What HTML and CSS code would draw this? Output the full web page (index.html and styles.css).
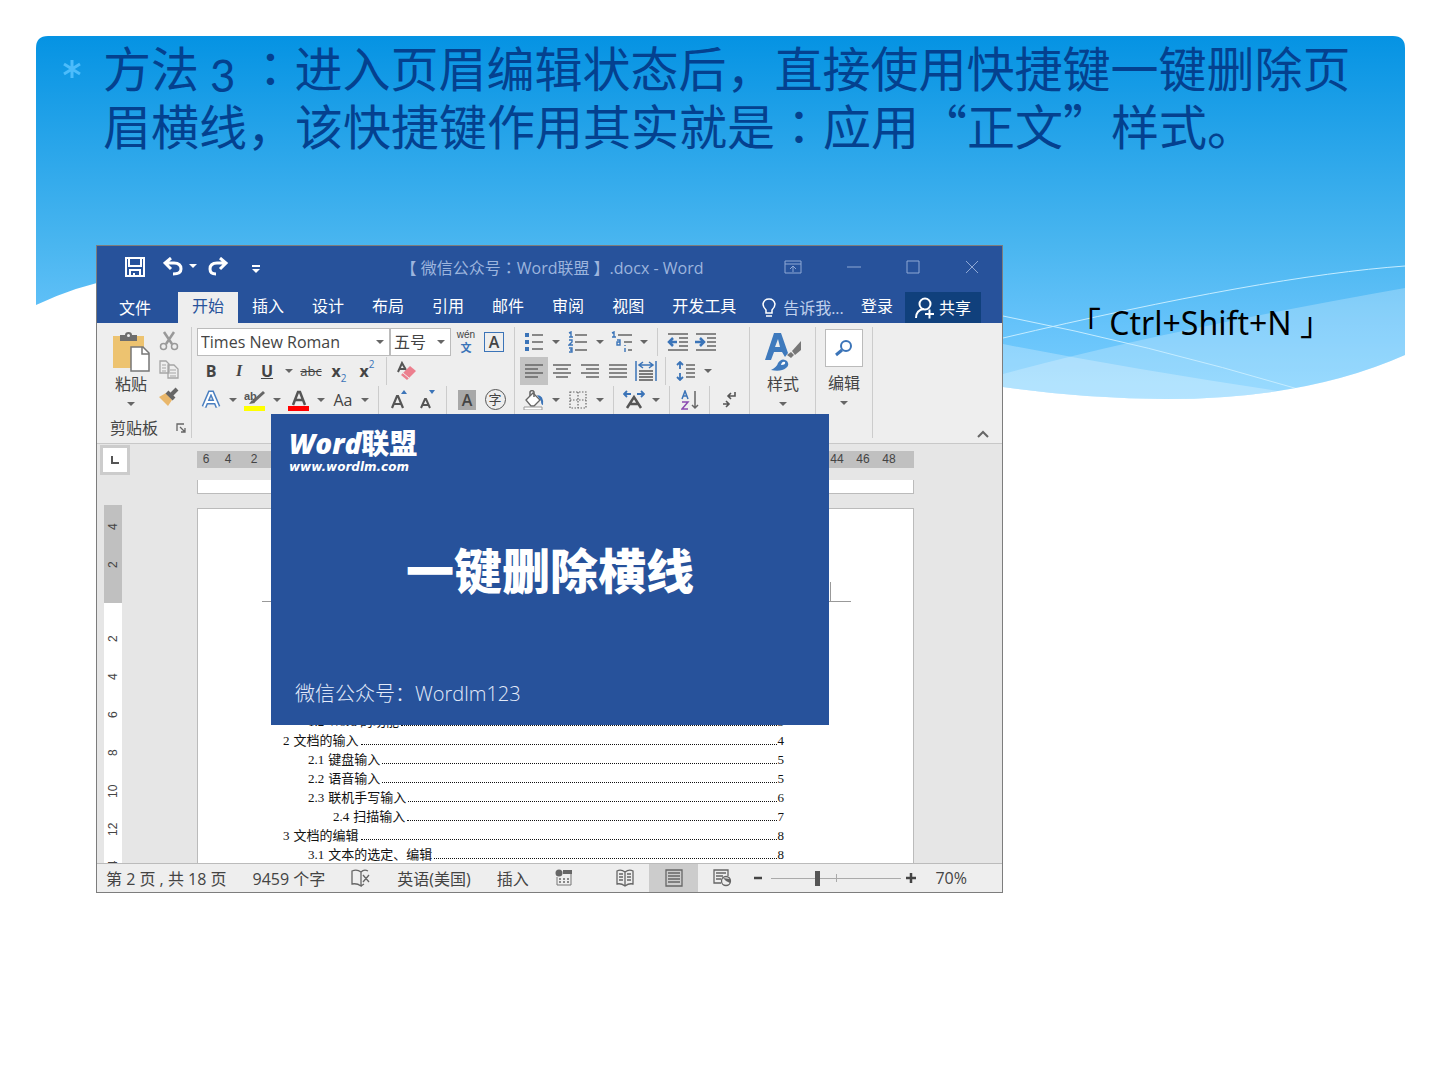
FILE: index.html
```
<!DOCTYPE html>
<html lang="zh-CN">
<head>
<meta charset="UTF-8">
<meta name="viewport" content="width=device-width, initial-scale=1.0">
<title>删除页眉横线</title>
<link rel="stylesheet" href="styles.css">
</head>
<body>
<div class="slide">
    <svg class="wave" viewBox="0 0 1369 363" preserveAspectRatio="none" aria-hidden="true">
        <defs>
            <linearGradient id="sky" x1="0" y1="0" x2="0" y2="1">
                <stop offset="0" stop-color="#0593e3"/>
                <stop offset=".58" stop-color="#4ab6f0"/>
                <stop offset=".8" stop-color="#66c3fa"/>
                <stop offset="1" stop-color="#7bd0ff"/>
            </linearGradient>
            <clipPath id="edge">
                <path d="M0 12Q0 0 12 0H1357Q1369 0 1369 12V319Q1270 363 1130 363Q1050 363 967 351C700 310 400 240 200 232Q80 230 0 269Z"/>
            </clipPath>
        </defs>
        <g clip-path="url(#edge)">
            <rect width="1369" height="363" fill="url(#sky)"/>
            <path d="M967 338Q1120 296 1369 252V363H967Z" fill="#fff" opacity=".24"/>
            <path d="M967 308Q1100 334 1250 356L1240 363H967Z" fill="#fff" opacity=".26"/>
            <path d="M967 302Q1230 240 1369 230M967 280Q1110 308 1262 353" fill="none" stroke="#c5ecff" stroke-width="1"/>
        </g>
    </svg>

    <ul class="points">
        <li>
            <svg class="star" viewBox="0 0 20 20" aria-hidden="true"><path d="M10 1V19M2 5L18 15M18 5L2 15"/></svg>
            <p>方法 <span class="num">3</span> <span class="colon" lang="ja">：</span>进入页眉编辑状态后，直接使用快捷键一键删除页<br>眉横线，该快捷键作用其实就是<span class="colon" lang="ja">：</span>应用“正文”样式。</p>
        </li>
    </ul>

    <div class="stage">
        <div class="word">
            <header class="titlebar">
                <div class="quick">
                    <button aria-label="保存"><svg width="38" height="20"><path d="M1 1H19V19H1Z M4 2V9H16V2 M5 19V13H15V19 M9 19V16" fill="none" stroke="#fff" stroke-width="2"/></svg></button>
                    <button aria-label="撤消"><svg width="45" height="20"><path d="M8 1L2 6L8 12M2 6H11Q18 6 18 12Q18 17 10 17" fill="none" stroke="#fff" stroke-width="3"/><path d="M26 7H34L30 11Z" fill="#fff"/></svg></button>
                    <button aria-label="恢复"><svg width="43" height="20"><path d="M12 1L18 6L12 12M18 6H9Q2 6 2 12Q2 17 8 17" fill="none" stroke="#fff" stroke-width="3"/></svg></button>
                    <button aria-label="自定义快速访问工具栏"><svg width="10" height="20"><path d="M1 8H9V10H1ZM1 12H9L5 16Z" fill="#fff"/></svg></button>
                </div>
                <div class="docname">【 微信公众号<span class="colon" lang="ja">：</span>Word联盟 】.docx - Word</div>
                <div class="winbtns">
                    <button aria-label="功能区显示选项"><svg width="18" height="14"><path d="M1 1H17V13H1ZM1 4H17M9 12V6M6 9L9 6L12 9"/></svg></button>
                    <button aria-label="最小化"><svg width="14" height="14"><path d="M0 7H14"/></svg></button>
                    <button aria-label="最大化"><svg width="14" height="14"><path d="M1 1H13V13H1Z"/></svg></button>
                    <button aria-label="关闭"><svg width="14" height="14"><path d="M1 1L13 13M13 1L1 13"/></svg></button>
                </div>
            </header>

            <nav class="tabs">
                <button class="tab file">文件</button>
                <button class="tab active">开始</button>
                <button class="tab">插入</button>
                <button class="tab">设计</button>
                <button class="tab">布局</button>
                <button class="tab">引用</button>
                <button class="tab">邮件</button>
                <button class="tab">审阅</button>
                <button class="tab">视图</button>
                <button class="tab">开发工具</button>
                <button class="tell"><svg width="14" height="20"><path d="M4 15V12Q1 9 1 6Q2 1 7 1Q12 1 13 6Q13 9 10 12V15ZM4 18H10" fill="none" stroke="#fff" stroke-width="1.5"/></svg>告诉我...</button>
                <button class="login">登录</button>
                <button class="share"><svg width="20" height="22"><circle cx="10" cy="7" r="5.5" fill="none" stroke="#fff" stroke-width="2"/><path d="M1 21Q1 13 9 12M10 17H19M14.500 12.500V21.500" fill="none" stroke="#fff" stroke-width="2"/></svg>共享</button>
            </nav>

            <div class="ribbon">
                <div class="group clip">
                    <div class="clip-tools">
                        <button class="big" aria-label="粘贴">
                            <svg width="38" height="40"><path d="M1 4H32V36H1Z" fill="#edc370"/><path d="M8 3H13Q13 0 16.500 0Q20 0 20 3H25V9H8Z" fill="#6d6d6d"/><circle cx="16.500" cy="3.500" r="1.500" fill="#eee"/><path d="M19 15H31L37 21V39H19Z" fill="#fff" stroke="#777" stroke-width="1.500"/><path d="M30 15V22H37" fill="none" stroke="#777" stroke-width="1.500"/></svg>
                            <span>粘贴</span>
                            <i class="caret"></i>
                        </button>
                        <div class="clip-side">
                            <button class="tool" aria-label="剪切"><svg width="20" height="20"><path d="M5 1L13 13M15 1L7 13" stroke="#999" stroke-width="2.500"/><circle cx="4.500" cy="15.500" r="3" fill="none" stroke="#999" stroke-width="1.500"/><circle cx="15.500" cy="15.500" r="3" fill="none" stroke="#999" stroke-width="1.500"/></svg></button>
                            <button class="tool" aria-label="复制"><svg width="20" height="20"><path d="M1 2H7L10 5V14H1ZM9 6H15L19 10V19H9Z" fill="#eee" stroke="#a5a5a5" stroke-width="1.300"/><path d="M3 6H7M3 9H7M3 12H7M11 11H17M11 14H17M11 17H17" stroke="#a5a5a5"/></svg></button>
                            <button class="tool" aria-label="格式刷"><svg width="20" height="20"><path d="M0 10L7 6L13 13L9 19Z" fill="#e9b76b"/><path d="M8 5L15 12" stroke="#666" stroke-width="4"/><path d="M12 8L18 2" stroke="#666" stroke-width="4"/></svg></button>
                        </div>
                    </div>
                    <div class="group-name">剪贴板<button aria-label="剪贴板选项"><svg width="10" height="10"><path d="M1 8V1H8M4 4L9 9M9 5V9H5" fill="none" stroke="#666" stroke-width="1.300"/></svg></button></div>
                </div>

                <div class="group">
                    <div class="row">
                        <label class="combo font"><select aria-label="字体"><option>Times New Roman</option></select></label>
                        <label class="combo size"><select aria-label="字号"><option>五号</option></select></label>
                        <button class="tool wen" aria-label="拼音指南"><small>wén</small><b>文</b></button>
                        <button class="tool" aria-label="字符边框"><span class="boxed">A</span></button>
                    </div>
                    <div class="row">
                        <button class="tool"><b>B</b></button>
                        <button class="tool serif"><em>I</em></button>
                        <button class="tool"><b><u>U</u></b></button>
                        <button class="drop" aria-label="下划线"><i class="caret"></i></button>
                        <button class="tool"><s>abc</s></button>
                        <button class="tool"><b>x</b><sub>2</sub></button>
                        <button class="tool"><b>x</b><sup>2</sup></button>
                        <span class="sep"></span>
                        <button class="tool" aria-label="清除格式"><svg width="22" height="20"><path d="M2 11L6 2L10 9M3 8H9" fill="none" stroke="#555" stroke-width="2"/><path d="M14 5L20 10L11 19L5 14Z" fill="#ec7f8e"/><path d="M7 12L13 17" stroke="#eee"/></svg></button>
                    </div>
                    <div class="row">
                        <button class="tool" aria-label="文本效果"><svg width="20" height="20"><path d="M3 17L9 3H11L17 17M6 12H14" fill="none" stroke="#4a7fc0" stroke-width="5"/><path d="M3 17L9 3H11L17 17M6 12H14" fill="none" stroke="#fff" stroke-width="2"/></svg></button>
                        <button class="drop" aria-label="文本效果选项"><i class="caret"></i></button>
                        <button class="tool mark" aria-label="突出显示"><svg width="22" height="24"><text x="0" y="12" class="ab">ab</text><path d="M9 14L20 4" stroke="#666" stroke-width="3"/><path d="M5 16L8 12L11 15Z" fill="#666"/><path d="M0 18H21V23H0Z" fill="#ff0"/></svg></button>
                        <button class="drop" aria-label="突出显示颜色"><i class="caret"></i></button>
                        <button class="tool" aria-label="字体颜色"><svg width="22" height="24"><path d="M5 17L10 4H12L17 17M7 12H15" fill="none" stroke="#555" stroke-width="2.500"/><path d="M0 18H21V23H0Z" fill="#f00"/></svg></button>
                        <button class="drop" aria-label="颜色选项"><i class="caret"></i></button>
                        <button class="tool">Aa</button>
                        <button class="drop" aria-label="更改大小写"><i class="caret"></i></button>
                        <span class="sep"></span>
                        <button class="tool" aria-label="增大字号"><svg width="18" height="20"><path d="M2 18L7 6H8L13 18M4 14H11" fill="none" stroke="#555" stroke-width="2.200"/><path d="M11 4H17L14 0Z" fill="#3b74b8"/></svg></button>
                        <button class="tool" aria-label="减小字号"><svg width="18" height="20"><path d="M3 18L7 9H8L12 18M4 15H11" fill="none" stroke="#555" stroke-width="2"/><path d="M11 0H17L14 4Z" fill="#3b74b8"/></svg></button>
                        <span class="sep"></span>
                        <button class="tool" aria-label="字符底纹"><span class="shaded">A</span></button>
                        <button class="tool" aria-label="带圈字符"><span class="ring">字</span></button>
                    </div>
                </div>

                <div class="group">
                    <div class="row">
                        <button class="tool" aria-label="项目符号"><svg width="18" height="20"><path d="M0 1H4V5H0ZM0 8H4V12H0ZM0 15H4V19H0Z" fill="#3b74b8"/><path d="M7 3H18M7 10H18M7 17H18" stroke="#666" stroke-width="1.500"/></svg></button>
                        <button class="drop" aria-label="项目符号选项"><i class="caret"></i></button>
                        <button class="tool" aria-label="编号"><svg width="20" height="22"><path d="M1 2L3 1V6M1 6H5M1 9H4V11L1 14H5M1 17H4V21H1M2 19H4" fill="none" stroke="#3b74b8" stroke-width="1.400"/><path d="M7 4H19M7 11H19M7 19H19" stroke="#666" stroke-width="1.500"/></svg></button>
                        <button class="drop" aria-label="编号选项"><i class="caret"></i></button>
                        <button class="tool" aria-label="多级列表"><svg width="22" height="22"><path d="M1 2L3 1V6M1 6H5M6 9H9V14H6V11H9M14 14V15M14 17V21" fill="none" stroke="#3b74b8" stroke-width="1.400"/><path d="M7 4H21M13 11H21M17 19H21" stroke="#666" stroke-width="1.500"/></svg></button>
                        <button class="drop" aria-label="多级列表选项"><i class="caret"></i></button>
                        <span class="sep"></span>
                        <button class="tool" aria-label="减少缩进"><svg width="22" height="18"><path d="M1 1H21M12 5H21M12 9H21M12 13H21M1 17H21" stroke="#666" stroke-width="1.500"/><path d="M10 9H2M6 5L2 9L6 13" fill="none" stroke="#3b74b8" stroke-width="2.500"/></svg></button>
                        <button class="tool" aria-label="增加缩进"><svg width="22" height="18"><path d="M1 1H21M12 5H21M12 9H21M12 13H21M1 17H21" stroke="#666" stroke-width="1.500"/><path d="M0 9H8M5 5L9 9L5 13" fill="none" stroke="#3b74b8" stroke-width="2.500"/></svg></button>
                    </div>
                    <div class="row">
                        <button class="tool on" aria-label="左对齐"><svg width="20" height="14"><path d="M1 1H19M1 5H14M1 9H19M1 13H14" stroke="#666" stroke-width="1.500"/></svg></button>
                        <button class="tool" aria-label="居中"><svg width="20" height="14"><path d="M1 1H19M4 5H16M1 9H19M4 13H16" stroke="#666" stroke-width="1.500"/></svg></button>
                        <button class="tool" aria-label="右对齐"><svg width="20" height="14"><path d="M1 1H19M6 5H19M1 9H19M6 13H19" stroke="#666" stroke-width="1.500"/></svg></button>
                        <button class="tool" aria-label="两端对齐"><svg width="20" height="14"><path d="M1 1H19M1 5H19M1 9H19M1 13H19" stroke="#666" stroke-width="1.500"/></svg></button>
                        <button class="tool" aria-label="分散对齐"><svg width="22" height="20"><path d="M1 0V20M21 0V20M5 4H17M8 1L4 4L8 7M14 1L18 4L14 7" fill="none" stroke="#3b74b8" stroke-width="1.500"/><path d="M4 10H18M4 13H18M4 16H18M4 19H18" stroke="#555" stroke-width="1.500"/></svg></button>
                        <span class="sep"></span>
                        <button class="tool" aria-label="行距"><svg width="20" height="20"><path d="M4 8V1M1 4L4 1L7 4M4 12V19M1 16L4 19L7 16" fill="none" stroke="#3b74b8" stroke-width="1.800"/><path d="M10 4H19M10 8H19M10 12H19M10 16H19" stroke="#666" stroke-width="1.500"/></svg></button>
                        <button class="drop" aria-label="行距选项"><i class="caret"></i></button>
                    </div>
                    <div class="row">
                        <button class="tool" aria-label="底纹"><svg width="22" height="20"><path d="M3 10L10 3L17 10L11 16H8Z" fill="#fff" stroke="#666" stroke-width="1.300"/><path d="M7 6V2Q9-1 11 2V7" fill="none" stroke="#666" stroke-width="1.500"/><path d="M14 5Q21 5 20 15Q18 15 18 11Z" fill="#3b74b8"/><path d="M1 17H19V20H1Z" fill="#fff" stroke="#999"/></svg></button>
                        <button class="drop" aria-label="底纹选项"><i class="caret"></i></button>
                        <button class="tool" aria-label="边框"><svg width="18" height="18"><path d="M1 1H17V17H1ZM1 9H17M9 1V17" fill="none" stroke="#666" stroke-width="1.200" stroke-dasharray="1.500 1.500"/></svg></button>
                        <button class="drop" aria-label="边框选项"><i class="caret"></i></button>
                        <span class="sep"></span>
                        <button class="tool" aria-label="中文版式"><svg width="22" height="20"><path d="M4 18L11 7L18 18M7 14H15" fill="none" stroke="#555" stroke-width="2.500"/><path d="M1 4H8M4 1L1 4L4 7M14 4H21M18 1L21 4L18 7" fill="none" stroke="#3b74b8" stroke-width="1.800"/></svg></button>
                        <button class="drop" aria-label="中文版式选项"><i class="caret"></i></button>
                        <span class="sep"></span>
                        <button class="tool" aria-label="排序"><svg width="18" height="20"><path d="M1 9L4 1L7 9M2 6H6" fill="none" stroke="#3b74b8" stroke-width="1.500"/><path d="M1 12H7L1 19H7" fill="none" stroke="#8a4ab0" stroke-width="1.500"/><path d="M14 1V18M11 15L14 18L17 15" fill="none" stroke="#666" stroke-width="1.500"/></svg></button>
                        <span class="sep"></span>
                        <button class="tool" aria-label="显示编辑标记"><svg width="16" height="18"><path d="M13 1V5H6M9 2L6 5L9 8M1 13H7M4 10L7 13L4 16" fill="none" stroke="#555" stroke-width="1.600"/></svg></button>
                    </div>
                </div>

                <div class="group styles">
                    <button class="big">
                        <svg width="38" height="40"><path d="M1 28L10 1H17L24 21L21 25L18 20H10L7 28ZM11 15H16L14 7Z" fill="#3f7abd" fill-rule="evenodd"/><path d="M37 9V18L31 23L28 19Z" fill="#777"/><path d="M27 20L30 23L27 26L23 23Z" fill="#777"/><path d="M7 38Q13 35 14 31Q18 25 23 29Q26 33 22 36Q17 40 7 38Z" fill="#3f7abd"/><path d="M17 33Q18 29 21 30Q22 33 17 33Z" fill="#fff"/></svg>
                        <span>样式</span>
                        <i class="caret"></i>
                    </button>
                </div>

                <div class="group edit">
                    <button class="big">
                        <span class="find"><svg width="18" height="18"><circle cx="11" cy="7" r="5" fill="none" stroke="#3b74b8" stroke-width="2"/><path d="M7 11L1 16" stroke="#3b74b8" stroke-width="3"/></svg></span>
                        <span>编辑</span>
                        <i class="caret"></i>
                    </button>
                </div>

                <button class="fold" aria-label="折叠功能区"><svg width="12" height="8"><path d="M1 7L6 2L11 7" fill="none" stroke="#666" stroke-width="2"/></svg></button>
            </div>

            <div class="doc">
                <div class="side">
                    <button class="tabstop" aria-label="制表符"><svg width="8" height="8"><path d="M1 0V7H8" fill="none" stroke="#555" stroke-width="2"/></svg></button>
                    <div class="vruler">
                        <div class="margin"><span>4</span><span>2</span></div>
                        <div class="body"><span>2</span><span>4</span><span>6</span><span>8</span><span>10</span><span>12</span><span>14</span></div>
                    </div>
                </div>
                <div class="pages">
                    <div class="hruler"><span>6</span><span>4</span><span>2</span><span class="rest">44</span><span>46</span><span>48</span></div>
                    <div class="prev"></div>
                    <div class="page">
                        <div class="headline"><i></i></div>
                        <div class="toc">
                            <a href="#s12" class="l2"><span>1.2</span>Word 的功能<i></i>3</a>
                            <a href="#s2"><span>2</span>文档的输入<i></i>4</a>
                            <a href="#s21" class="l2"><span>2.1</span>键盘输入<i></i>5</a>
                            <a href="#s22" class="l2"><span>2.2</span>语音输入<i></i>5</a>
                            <a href="#s23" class="l2"><span>2.3</span>联机手写输入<i></i>6</a>
                            <a href="#s24" class="l3"><span>2.4</span>扫描输入<i></i>7</a>
                            <a href="#s3"><span>3</span>文档的编辑<i></i>8</a>
                            <a href="#s31" class="l2"><span>3.1</span>文本的选定、编辑<i></i>8</a>
                        </div>
                    </div>
                </div>
            </div>

            <footer class="status">
                <span>第 2 页 , 共 18 页</span>
                <span>9459 个字</span>
                <svg width="20" height="18"><path d="M10 3Q6 0 1 2V15Q6 14 10 17V3Q13 0 17 2M10 17L13 15M12 6L18 13M18 6L12 13" fill="none" stroke="#666" stroke-width="1.300"/></svg>
                <span>英语(美国)</span>
                <span>插入</span>
                <svg width="18" height="18"><circle cx="4" cy="4" r="3.500" fill="#666"/><path d="M8 1H17V5H8Z" fill="#666"/><path d="M2 8V16H16V5" fill="none" stroke="#777"/><path d="M4 10H15M4 13H15" stroke="#666" stroke-width="1.500" stroke-dasharray="2 2"/></svg>
                <div class="views">
                    <button aria-label="阅读视图"><svg width="18" height="18"><path d="M9 3Q5 0 1 2V15Q5 14 9 17Q13 14 17 15V2Q13 0 9 3V17M3 5H7M3 8H7M3 11H7M11 5H15M11 8H15M11 11H15" fill="none" stroke="#666" stroke-width="1.300"/></svg></button>
                    <button class="on" aria-label="页面视图"><svg width="18" height="18"><path d="M1 1H17V17H1ZM3 4H15M3 7H15M3 10H15M3 13H15" fill="none" stroke="#666" stroke-width="1.300"/></svg></button>
                    <button aria-label="Web 版式视图"><svg width="19" height="18"><path d="M8 14H1V1H15V7M3 4H13M3 7H10M3 10H8" fill="none" stroke="#666" stroke-width="1.300"/><circle cx="13" cy="12" r="4.500" fill="#eee" stroke="#666" stroke-width="1.300"/><path d="M10 9L13 12L17 14V10Z" fill="#666"/></svg></button>
                </div>
                <div class="zoom">
                    <button aria-label="缩小"><svg width="10" height="10"><path d="M1 5H9" stroke="#444" stroke-width="2.500"/></svg></button>
                    <input type="range" min="10" max="100" value="41" aria-label="显示比例">
                    <button aria-label="放大"><svg width="10" height="10"><path d="M0 5H10M5 0V10" stroke="#444" stroke-width="2.500"/></svg></button>
                    <span>70%</span>
                </div>
            </footer>

            <div class="cover">
                <div class="logo"><strong>Word<span>联盟</span></strong><small>www.wordlm.com</small></div>
                <h1>一键删除横线</h1>
                <p>微信公众号：Wordlm123</p>
            </div>
        </div>
        <p class="keys">「 Ctrl+Shift+N 」</p>
    </div>
</div>
</body>
</html>
```
FILE: styles.css
```
* {
    box-sizing: border-box;
}
body {
    margin: 0;
    background: #fff;
    font-family: "Open Sans", "Noto Sans CJK SC", sans-serif;
}
ul, p, h1 {
    margin: 0;
    padding: 0;
    list-style: none;
}
button {
    display: flex;
    align-items: center;
    justify-content: center;
    margin: 0;
    padding: 0;
    border: 0;
    background: none;
    font: inherit;
    color: inherit;
}
svg {
    display: block;
    flex: none;
}
.slide {
    position: relative;
    min-height: 100vh;
    padding: 37px 0 60px;
}
.wave {
    position: absolute;
    left: 36px;
    top: 36px;
    z-index: -1;
    width: calc(100% - 71px);
    height: 363px;
}
.colon {
    font-family: "Noto Sans CJK JP", sans-serif;
    line-height: 1;
}

/* 标题 */
.points li {
    display: flex;
    padding-left: 62px;
    gap: 21px;
    font: 48px/58px "Noto Sans CJK SC", sans-serif;
    color: #04418f;
    white-space: nowrap;
}
.star {
    width: 20px;
    height: 20px;
    margin-top: 22px;
    fill: none;
    stroke: #4cbcfb;
    stroke-width: 3;
}
.num {
    font-family: Lato, sans-serif;
    font-variant-numeric: oldstyle-nums;
    line-height: 1;
}
.stage {
    display: grid;
    grid-template-columns: minmax(0, 907fr) minmax(0, 437fr);
    align-items: start;
    margin-top: 92px;
    padding-left: 96px;
}
.keys {
    padding: 54px 0 0 66px;
    font: 32px/48px "Noto Sans", "Noto Sans CJK SC", sans-serif;
    color: #000;
    white-space: nowrap;
}

/* Word 窗口 */
.word {
    position: relative;
    border: 1px solid #7d7d7d;
    background: #eee;
    font-size: 16px;
    color: #444;
}
.titlebar {
    display: flex;
    align-items: center;
    height: 46px;
    padding-bottom: 4px;
    background: #27529b;
}
.quick {
    display: flex;
    flex: 1;
    padding-left: 28px;
}
.docname {
    color: #9db5de;
    font-size: 16px;
    white-space: nowrap;
}
.winbtns {
    display: flex;
    flex: 1;
    justify-content: flex-end;
    gap: 45px;
    padding-right: 23px;
}
.winbtns path {
    fill: none;
    stroke: #8fa8d4;
    stroke-width: 1;
}
.tabs {
    display: flex;
    height: 31px;
    padding-right: 21px;
    background: #27529b;
    color: #fff;
    line-height: 28px;
    white-space: nowrap;
}
.tab {
    padding: 0 14px 4px;
}
.file {
    padding: 0 27px 0 22px;
}
.active {
    background: #eee;
    color: #27529b;
}
.tell {
    gap: 7px;
    padding-left: 12px;
    color: #c0d0ec;
}
.login {
    margin-left: auto;
    padding-bottom: 4px;
}
.share {
    gap: 4px;
    margin-left: 12px;
    padding: 0 10px;
    background: #10407c;
}

/* 功能区 */
.ribbon {
    display: flex;
    height: 121px;
    padding: 4px 0 5px;
    border-bottom: 1px solid #c8c8c8;
    background: #eee;
}
.group {
    flex: none;
    padding: 0 5px;
    border-right: 1px solid #ccc;
}
.row {
    display: flex;
    height: 29px;
    align-items: center;
}
.tool {
    width: 28px;
    height: 28px;
    flex: none;
    font-size: 16px;
}
.tool.on {
    background: #c3c3c3;
}
.tool s {
    font-size: 13px;
}
.tool sub, .tool sup {
    align-self: flex-end;
    font-size: 10px;
    line-height: 14px;
    color: #3b74b8;
}
.tool sup {
    align-self: flex-start;
}
.serif {
    font-family: "Liberation Serif", serif;
    font-weight: bold;
}
.drop {
    width: 16px;
    height: 28px;
    flex: none;
}
.caret {
    border: 4px solid transparent;
    border-top-color: #666;
    border-bottom: 0;
}
.sep {
    flex: none;
    width: 1px;
    height: 28px;
    margin: 0 6px 0 5px;
    background: #ccc;
}
.combo {
    position: relative;
    height: 28px;
    border: 1px solid #bbb;
    background: #fff;
}
.combo::after {
    content: "";
    position: absolute;
    right: 5px;
    top: 11px;
    border: 4px solid transparent;
    border-top-color: #666;
    border-bottom: 0;
}
.combo select {
    width: 100%;
    height: 100%;
    padding: 0 3px;
    border: 0;
    appearance: none;
    background: none;
    font: 16px "Open Sans", "Noto Sans CJK SC", sans-serif;
    color: #444;
}
.font {
    width: 193px;
}
.size {
    width: 61px;
    margin-right: 1px;
}
.wen {
    flex-direction: column;
}
.wen small {
    font: 10px/12px "Liberation Sans", sans-serif;
}
.wen b {
    font-size: 11px;
    line-height: 14px;
    color: #3b74b8;
}
.boxed, .shaded {
    width: 20px;
    height: 20px;
    border: 1px solid #3b74b8;
    font-weight: 600;
    line-height: 18px;
}
.shaded {
    width: 18px;
    border: 0;
    background: #a8a8a8;
    line-height: 20px;
}
.ring {
    width: 21px;
    height: 21px;
    border: 1px solid #555;
    border-radius: 50%;
    font-size: 13px;
    line-height: 18px;
}
.ab {
    font: bold 11px "Liberation Sans", sans-serif;
    fill: #555;
}
.clip {
    display: flex;
    flex-direction: column;
    justify-content: space-between;
    width: 95px;
}
.clip-tools {
    display: flex;
    gap: 3px;
    padding-left: 8px;
}
.big {
    flex-direction: column;
    width: 44px;
    padding-top: 5px;
    line-height: 24px;
}
.big .caret {
    margin-top: 6px;
}
.clip .big {
    justify-content: flex-start;
    width: 42px;
}
.group-name {
    display: flex;
    align-items: center;
    justify-content: space-between;
    padding-left: 8px;
    line-height: 20px;
    white-space: nowrap;
}
.styles {
    width: 66px;
    padding: 0 11px;
}
.edit {
    width: 57px;
    padding: 0 6px;
}
.edit .big {
    padding-top: 2px;
}
.find {
    display: grid;
    place-items: center;
    width: 38px;
    height: 38px;
    margin-bottom: 4px;
    border: 1px solid #bbb;
    background: #fff;
}
.fold {
    align-self: flex-end;
    margin: 0 13px 0 auto;
}

/* 文档 */
.doc {
    display: grid;
    grid-template-columns: 100px 1fr;
    height: 419px;
    padding-right: 88px;
    overflow: hidden;
    background: #e6e6e6;
}
.tabstop {
    width: 30px;
    height: 30px;
    margin: 1px 3px;
    border: 3px solid #ccc;
    background: #fff;
}
.vruler {
    width: 18px;
    margin: 30px 0 0 7px;
    background: #fff;
    font: 12px/18px "Liberation Sans", sans-serif;
}
.vruler span {
    display: block;
    width: 18px;
    height: 38px;
    writing-mode: vertical-rl;
    transform: rotate(180deg);
    text-align: center;
}
.vruler .margin {
    height: 98px;
    padding-top: 3px;
    background: #c0c0c0;
}
.vruler .body {
    padding-top: 17px;
}
.pages {
    display: flex;
    flex-direction: column;
}
.hruler {
    display: flex;
    height: 17px;
    margin-top: 7px;
    padding-right: 12px;
    background: #c0c0c0;
    font: 12px/17px "Liberation Sans", sans-serif;
    text-align: center;
}
.hruler span {
    width: 26px;
}
.hruler span:first-child {
    width: 18px;
}
.hruler .rest {
    margin-left: auto;
}
.prev {
    height: 14px;
    margin: 12px 0 14px;
    border: 1px solid #bbb;
    border-top: 0;
    background: #fff;
}
.page {
    flex: 1;
    padding: 0 62px 0 64px;
    border: 1px solid #bbb;
    border-bottom: 0;
    background: #fff;
}
.headline {
    display: flex;
    justify-content: flex-end;
    align-items: flex-end;
    height: 93px;
    border-bottom: 1px solid #999;
}
.headline i {
    width: 21px;
    height: 19px;
    border-left: 1px solid #999;
}
.toc {
    padding: 110px 67px 0 21px;
    font: 13px/19px "Liberation Serif", "Noto Sans CJK SC", serif;
}
.toc a {
    display: flex;
    height: 19px;
    color: #111;
    text-decoration: none;
}
.toc span {
    margin-right: 4px;
}
.toc i {
    flex: 1;
    height: 14px;
    margin: 0 1px 0 2px;
    border-bottom: 1px dotted #111;
}
.toc .l2 {
    padding-left: 25px;
}
.toc .l3 {
    padding-left: 50px;
}

/* 状态栏 */
.status {
    display: flex;
    align-items: center;
    gap: 26px;
    height: 29px;
    padding: 0 35px 0 9px;
    border-top: 1px solid #bbb;
    background: #eee;
    white-space: nowrap;
}
.views {
    display: flex;
    align-self: stretch;
    margin-left: auto;
}
.views button {
    width: 49px;
}
.views .on {
    background: #ccc;
}
.zoom {
    display: flex;
    align-items: center;
    margin-left: -20px;
}
.zoom input {
    width: 130px;
    height: 20px;
    margin: 0 5px 0 8px;
    appearance: none;
    background: linear-gradient(#aaa, #aaa) center / 100% 1px no-repeat, linear-gradient(#aaa, #aaa) center / 1px 8px no-repeat;
}
.zoom input::-webkit-slider-thumb {
    appearance: none;
    width: 5px;
    height: 15px;
    background: #555;
}
.zoom span {
    margin-left: 19px;
}

/* 盖在文档上的封面 */
.cover {
    position: absolute;
    left: 174px;
    right: 173px;
    top: 168px;
    bottom: 167px;
    display: grid;
    grid-template-rows: 1fr auto 1fr;
    justify-items: center;
    padding: 12px 18px 16px;
    background: #27529b;
    color: #fff;
}
.logo {
    justify-self: start;
    font-style: italic;
    font-weight: bold;
}
.logo strong {
    display: block;
    font-size: 28px;
    line-height: 34px;
}
.logo span {
    font-style: normal;
}
.logo small {
    display: block;
    font: italic bold 12px/14px "DejaVu Sans", sans-serif;
}
.cover h1 {
    font: 900 48px/56px "Noto Sans CJK SC", sans-serif;
}
.cover p {
    align-self: end;
    justify-self: start;
    padding-left: 6px;
    font-size: 20px;
    font-weight: 300;
    line-height: 30px;
    color: #e3ebfa;
}
```
